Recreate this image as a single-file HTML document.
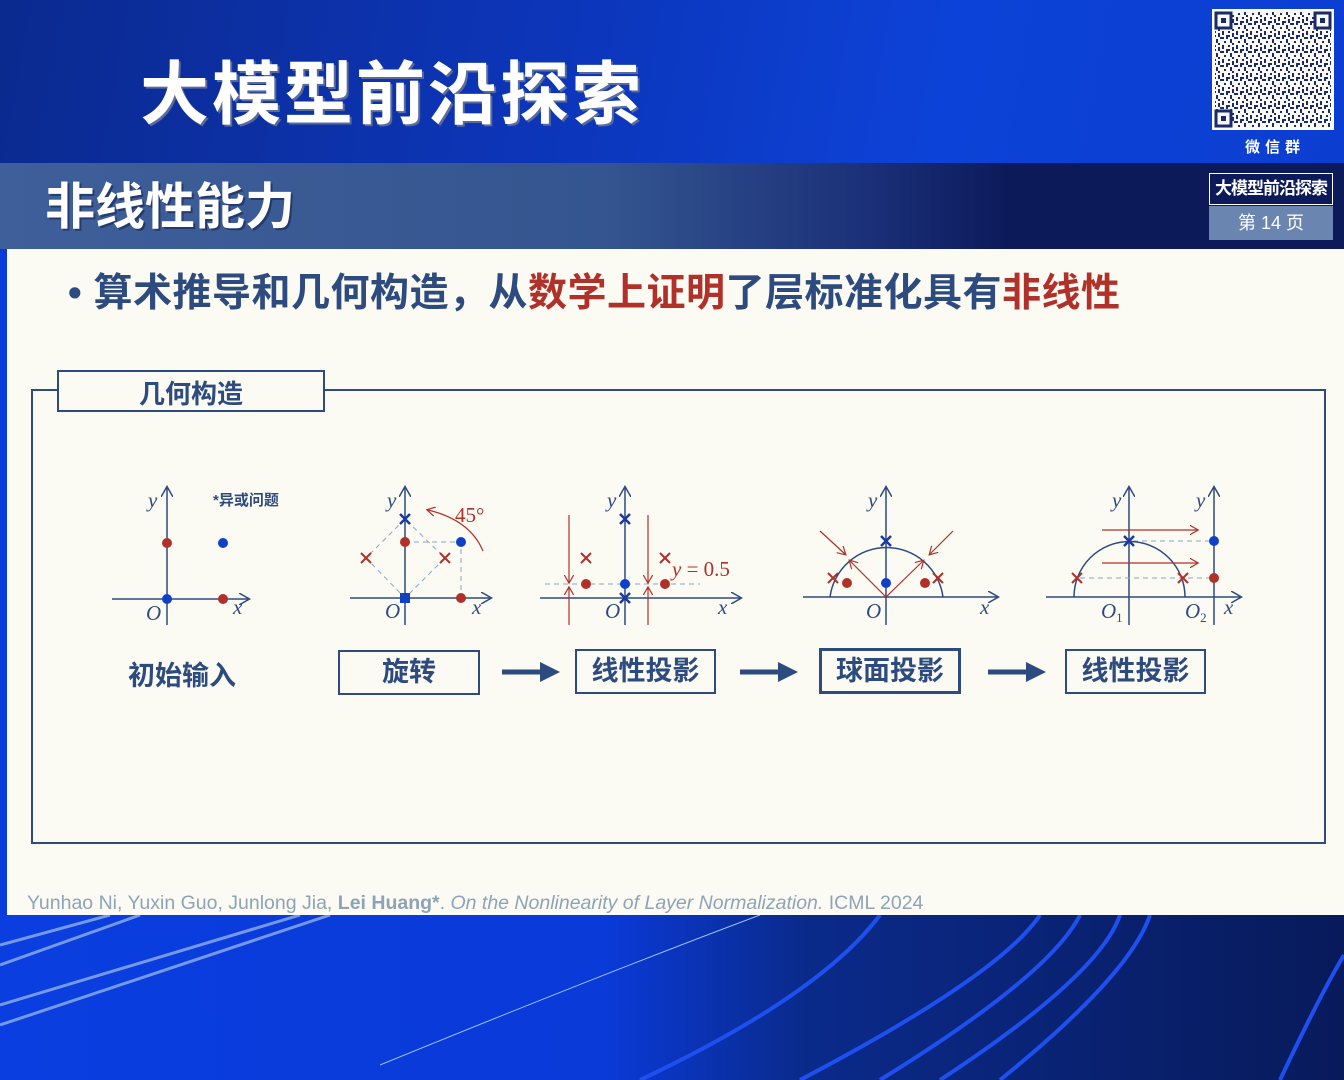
<!DOCTYPE html>
<html><head><meta charset="utf-8"><style>
*{margin:0;padding:0}
body{width:1344px;height:1080px;overflow:hidden;position:relative;background:#0a3ad8;font-family:"Liberation Sans","Noto Sans CJK SC",sans-serif}
.top{position:absolute;left:0;top:0;width:1344px;height:163px;background:linear-gradient(100deg,#0b2a8f 0%,#0c35b8 40%,#0d42d8 70%,#0b3ed0 100%)}
.title{position:absolute;left:140px;top:38px;font-size:69px;font-weight:bold;color:#fff;letter-spacing:3px;text-shadow:2px 2px 0 #5a6a9a}
.band{position:absolute;left:0;top:163px;width:1344px;height:86px;background:linear-gradient(90deg,#3f5f9a 0%,#34558f 45%,#1a2f78 65%,#0c1a5a 75%,#0c1a5a 100%)}
.band .h{position:absolute;left:45px;top:4px;font-size:50px;font-weight:bold;color:#fff;text-shadow:2px 2px 0 #243a6a}
.content{position:absolute;left:7px;top:249px;width:1337px;height:666px;background:#fbfbf3}
.bul{position:absolute;left:68px;top:262px;font-size:39px;font-weight:bold;color:#2d4b7e;white-space:nowrap;letter-spacing:0.5px}
.bul .r{color:#b0302a}
.rb{position:absolute;left:1209px;top:173px;width:122px;height:30px;border:1.5px solid #fff;background:#0c1a5a;color:#fff;font-size:17px;font-weight:bold;text-align:center;line-height:30px;letter-spacing:-1px}
.pg{position:absolute;left:1209px;top:206px;width:124px;height:34px;background:#6a86b0;color:#fff;font-size:18px;text-align:center;line-height:34px}
.qr{position:absolute;left:1212px;top:9px}
.wx{position:absolute;left:1245px;top:136px;color:#fff;font-size:15px;letter-spacing:5px;font-weight:bold}
.ref{position:absolute;left:27px;top:892px;font-size:19.5px;color:#8ea3b8;white-space:nowrap}
.lbl{position:absolute;font-size:27px;font-weight:bold;color:#2d4b7e;text-align:center;box-sizing:border-box}
.bx{border:2px solid #2d4b7e;height:45px;line-height:40px}
</style></head><body>
<div class="top"></div>
<svg style="position:absolute;left:0;top:915px" width="1344" height="165">
<defs><linearGradient id="bg" x1="0" x2="1"><stop offset="0" stop-color="#0a3ee0"/><stop offset=".45" stop-color="#0a3ad8"/><stop offset=".6" stop-color="#0a2a8a"/><stop offset="1" stop-color="#081a5a"/></linearGradient></defs>
<rect width="1344" height="165" fill="url(#bg)"/>
<g fill="none" stroke="#8fb0e8" stroke-width="3" opacity=".8"><path d="M0 30 L110 0"/><path d="M0 50 L140 0"/><path d="M0 90 L300 0"/><path d="M0 110 L330 0"/></g>
<path d="M380 150 Q600 60 760 0" stroke="#a0c0ff" stroke-width="1" fill="none"/>
<g fill="none" stroke="#1e50f0" stroke-width="4"><path d="M640 165 Q820 80 880 0"/><path d="M800 165 Q1000 60 1040 0"/><path d="M880 165 Q1050 60 1080 0"/><path d="M940 165 Q1100 60 1120 0"/><path d="M1000 165 Q1130 60 1150 0"/><path d="M1280 165 Q1320 80 1344 40"/></g>
</svg>
<div class="title">大模型前沿探索</div>
<svg class="qr" width="122" height="121" viewBox="0 0 122 121">
<defs><pattern id="q" width="14" height="14" patternUnits="userSpaceOnUse"><rect width="14" height="14" fill="#fbfbf3"/><g fill="#1a2a6a"><rect x="0" y="0" width="2" height="2"/><rect x="4" y="2" width="2" height="4"/><rect x="8" y="0" width="4" height="2"/><rect x="2" y="8" width="2" height="2"/><rect x="6" y="6" width="2" height="2"/><rect x="10" y="8" width="2" height="4"/><rect x="0" y="12" width="4" height="2"/><rect x="6" y="10" width="2" height="4"/><rect x="12" y="4" width="2" height="2"/></g></pattern></defs>
<rect width="122" height="121" fill="#fbfbf3"/><rect x="3" y="3" width="116" height="115" fill="url(#q)"/>
<g fill="#fbfbf3" stroke="#1a2a6a" stroke-width="3"><rect x="4" y="4" width="15" height="15"/><rect x="103" y="4" width="15" height="15"/><rect x="4" y="102" width="15" height="15"/></g>
<g fill="#1a2a6a"><rect x="9" y="9" width="5" height="5"/><rect x="108" y="9" width="5" height="5"/><rect x="9" y="107" width="5" height="5"/></g>
</svg>
<div class="wx">微信群</div>
<div class="band"><div class="h">非线性能力</div></div>
<div class="rb">大模型前沿探索</div>
<div class="pg">第 14 页</div>
<div class="content"></div>
<div class="bul">• 算术推导和几何构造，从<span class="r">数学上证明</span>了层标准化具有<span class="r">非线性</span></div>
<svg style="position:absolute;left:0;top:0" width="1344" height="1080" font-family="Liberation Serif,serif">
<defs>
<marker id="ab" markerWidth="8" markerHeight="8" refX="6" refY="4" orient="auto"><path d="M0 0 L7 4 L0 8" fill="none" stroke="#2d4b7e" stroke-width="1"/></marker>
<marker id="ar" markerWidth="8" markerHeight="8" refX="6" refY="4" orient="auto"><path d="M0 0 L7 4 L0 8" fill="none" stroke="#b0302a" stroke-width="1"/></marker>
<marker id="af" markerWidth="4" markerHeight="4" refX="2" refY="2" orient="auto"><path d="M0 0 L4 2 L0 4z" fill="#2d4b7e"/></marker>
</defs>
<rect x="32" y="390" width="1293" height="453" fill="none" stroke="#2d4b7e" stroke-width="2"/>
<rect x="58" y="371" width="266" height="40" fill="#fbfbf3" stroke="#2d4b7e" stroke-width="2"/>
<g stroke="#2d4b7e" stroke-width="1.5" fill="none" marker-end="url(#ab)">
<path d="M167 625 V488"/><path d="M112 599 H248"/>
<path d="M405 625 V488"/><path d="M350 598 H490"/>
<path d="M625 625 V488"/><path d="M540 598 H740"/>
<path d="M886 625 V488"/><path d="M803 597 H997"/>
<path d="M1129 625 V488"/><path d="M1214 625 V488"/><path d="M1046 597 H1240"/>
</g>
<g stroke="#2d4b7e" stroke-width="5" fill="none" marker-end="url(#af)"><path d="M502 672 H550"/><path d="M740 672 H788"/><path d="M988 672 H1036"/></g>
<g stroke="#8aa6c8" stroke-width="1" stroke-dasharray="5 4" fill="none">
<path d="M405 519 L366 558 L405 598 L445 558 Z"/><path d="M405 542 H461 V598"/>
<path d="M545 584 H700"/>
<path d="M1133 541 H1210"/><path d="M1080 578 H1210"/>
</g>
<g stroke="#2d4b7e" stroke-width="1.5" fill="none"><path d="M830 597 A57 57 0 0 1 943 597"/><path d="M1074 597 A55 55 0 0 1 1185 597"/></g>
<g stroke="#b0302a" stroke-width="1.2" fill="none" marker-end="url(#ar)">
<path d="M483 551 Q470 520 428 510"/>
<path d="M569 515 V582"/><path d="M569 625 V588"/><path d="M648 515 V582"/><path d="M648 625 V588"/>
<path d="M820 531 L845 554"/><path d="M953 531 L930 554"/><path d="M886 597 L850 561"/><path d="M886 597 L923 561"/>
<path d="M1102 530 H1197"/><path d="M1102 563 H1197"/>
</g>
<g fill="#b0302a"><circle cx="167" cy="543" r="5"/><circle cx="223" cy="599" r="5"/><circle cx="405" cy="542" r="5"/><circle cx="461" cy="598" r="5"/><circle cx="586" cy="584" r="5"/><circle cx="665" cy="584" r="5"/><circle cx="847" cy="583" r="5"/><circle cx="925" cy="583" r="5"/><circle cx="1214" cy="578" r="5"/></g>
<g fill="#1040c8"><circle cx="223" cy="543" r="5"/><circle cx="167" cy="599" r="5"/><circle cx="461" cy="542" r="5"/><rect x="400" y="593" width="10" height="10"/><circle cx="625" cy="584" r="5"/><circle cx="886" cy="583" r="5"/><circle cx="1214" cy="541" r="5"/></g>
<g stroke="#b0302a" stroke-width="2"><path d="M361 553l10 10m0-10l-10 10"/><path d="M440 553l10 10m0-10l-10 10"/><path d="M581 553l10 10m0-10l-10 10"/><path d="M660 553l10 10m0-10l-10 10"/><path d="M828 573l10 10m0-10l-10 10"/><path d="M933 573l10 10m0-10l-10 10"/><path d="M1072 573l10 10m0-10l-10 10"/><path d="M1178 573l10 10m0-10l-10 10"/></g>
<g stroke="#1a3aa0" stroke-width="2.5"><path d="M400 514l10 10m0-10l-10 10"/><path d="M620 514l10 10m0-10l-10 10"/><path d="M620 593l10 10m0-10l-10 10"/><path d="M881 536l10 10m0-10l-10 10"/><path d="M1124 536l10 10m0-10l-10 10"/></g>
<g fill="#2d4b7e" font-style="italic" font-size="21">
<text x="148" y="507">y</text><text x="146" y="620">O</text><text x="233" y="614">x</text>
<text x="387" y="507">y</text><text x="385" y="618">O</text><text x="472" y="614">x</text>
<text x="607" y="507">y</text><text x="605" y="618">O</text><text x="718" y="614">x</text>
<text x="868" y="507">y</text><text x="866" y="618">O</text><text x="980" y="614">x</text>
<text x="1112" y="507">y</text><text x="1196" y="507">y</text><text x="1101" y="618">O<tspan font-size="13" font-style="normal" dy="4">1</tspan></text><text x="1185" y="618">O<tspan font-size="13" font-style="normal" dy="4">2</tspan></text><text x="1224" y="614">x</text>
</g>
<text x="455" y="522" fill="#b0302a" font-size="21">45°</text>
<text x="672" y="576" fill="#b0302a" font-size="21"><tspan font-style="italic">y</tspan> = 0.5</text>
<text x="213" y="505" fill="#2d4b7e" font-size="15" font-weight="bold" font-family="Liberation Sans,Noto Sans CJK SC,sans-serif">*异或问题</text>
</svg>
<div class="lbl" style="left:58px;top:374px;width:266px;font-size:26px">几何构造</div>
<div class="lbl" style="left:112px;top:654px;width:140px">初始输入</div>
<div class="lbl bx" style="left:338px;top:650px;width:142px">旋转</div>
<div class="lbl bx" style="left:575px;top:649px;width:141px">线性投影</div>
<div class="lbl bx" style="left:819px;top:648px;width:142px;border-width:3px;height:46px">球面投影</div>
<div class="lbl bx" style="left:1065px;top:649px;width:141px">线性投影</div>
<div class="ref">Yunhao Ni, Yuxin Guo, Junlong Jia, <b>Lei Huang*</b>. <i>On the Nonlinearity of Layer Normalization.</i> ICML 2024</div>
</body></html>
